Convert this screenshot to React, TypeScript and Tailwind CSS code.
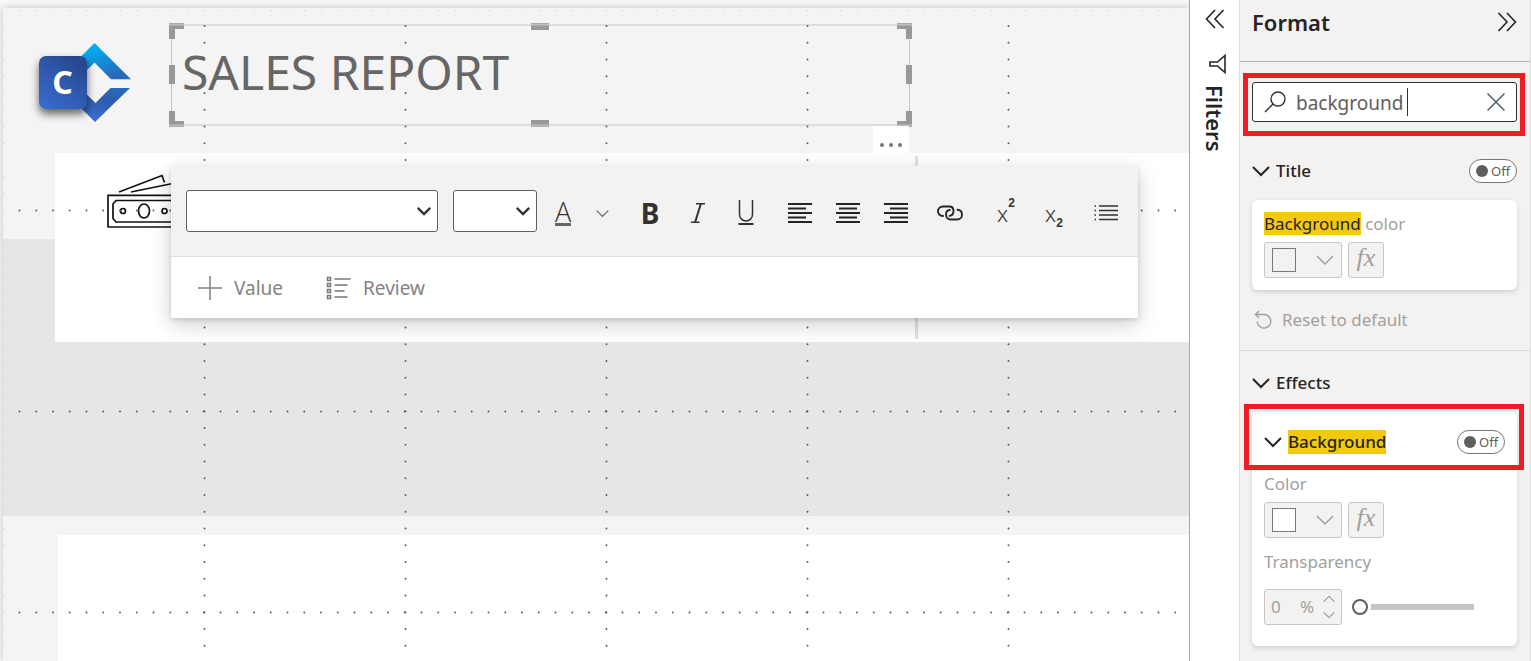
import type { ReactNode } from "react";

const COLUMNS = [201, 402, 603, 804, 1005];
const ROWS = [202, 403, 604];

function Chevron({ className = "", size = 18, stroke = 2 }: { className?: string; size?: number; stroke?: number }) {
  return (
    <svg width={size} height={size} viewBox="0 0 18 18" className={className} fill="none" stroke="currentColor" strokeWidth={stroke} aria-hidden="true">
      <path d="M1 5l8 8 8-8" />
    </svg>
  );
}

function Logo() {
  return (
    <svg className="absolute left-[27px] top-[27px]" width="112" height="96" viewBox="30 35 112 96" aria-label="Logo">
      <defs>
        <linearGradient id="upper" x1="0" y1="0" x2="0.5" y2="1">
          <stop offset="0" stopColor="#00b4f5" />
          <stop offset="0.3" stopColor="#06a6ea" />
          <stop offset="1" stopColor="#2a68b8" />
        </linearGradient>
        <linearGradient id="lower" x1="0.8" y1="0" x2="0.4" y2="1">
          <stop offset="0" stopColor="#2270bd" />
          <stop offset="0.4" stopColor="#2f5bae" />
          <stop offset="1" stopColor="#3a6dd0" />
        </linearGradient>
        <linearGradient id="tile" x1="0.9" y1="0" x2="0.2" y2="1">
          <stop offset="0" stopColor="#244486" />
          <stop offset="0.5" stopColor="#2f58ac" />
          <stop offset="1" stopColor="#376acb" />
        </linearGradient>
        <filter id="tileShadow" x="-30%" y="-30%" width="160%" height="170%">
          <feDropShadow dx="0" dy="5" stdDeviation="4" floodColor="#000" floodOpacity="0.6" />
        </filter>
      </defs>
      <path d="M94.500 43L131 79.300H111L94.500 62.500 80 77V57.500z" fill="url(#upper)" />
      <path d="M130 88L95 122 78 105V86L95.500 103 110.500 88z" fill="url(#lower)" />
      <rect x="39" y="56" width="48" height="53" rx="7" fill="url(#tile)" filter="url(#tileShadow)" />
      <text x="62.500" y="94" textAnchor="middle" fontFamily="Noto Sans, sans-serif" fontWeight="700" fontSize="32" fill="#fff">C</text>
    </svg>
  );
}

function MoneyIcon() {
  return (
    <svg className="absolute left-[103px] top-[165px]" width="76" height="56" viewBox="106 173 76 56" fill="none" stroke="#111" strokeWidth="1.700" aria-hidden="true">
      <path d="M119 192L162 175.500l2.500 7M131 192l44-9" />
      <path d="M108 195.300h73M108 227h73M108 194.500v33" />
      <path d="M176 200.500h-60l-3 3.500v14.500l3 3.500h60" />
      <circle cx="123" cy="211" r="2.500" />
      <ellipse cx="144" cy="211" rx="5.500" ry="7" />
      <circle cx="164.500" cy="211" r="2.500" />
    </svg>
  );
}

function GridDots() {
  return (
    <svg className="pointer-events-none absolute inset-0 h-full w-full" fill="none" strokeLinecap="round" strokeDasharray="0.01 16.74" aria-hidden="true">
      <g stroke="#c4c4c4" strokeWidth="1.200">
        <line x1="17" y1="2.500" x2="1184" y2="2.500" />
        <line x1="1.500" y1="18" x2="1.500" y2="2000" />
      </g>
      <g stroke="#5a5a5a" strokeWidth="1.900">
        {COLUMNS.map((x) => (
          <line key={x} x1={x + 0.5} y1="18" x2={x + 0.5} y2="2000" />
        ))}
        {ROWS.map((y) => (
          <line key={y} x1="16.500" y1={y + 0.5} x2="1184" y2={y + 0.5} />
        ))}
      </g>
    </svg>
  );
}

function SelectionFrame() {
  return (
    <svg className="pointer-events-none absolute -left-[2px] -top-[1px]" width="743" height="105" viewBox="169 23 743 105" fill="none" aria-hidden="true">
      <path d="M172 25h737M172 125h737" stroke="#dedede" strokeWidth="2" />
      <path d="M171.500 25v101M909.500 25v101" stroke="#c4c4c4" />
      <g fill="#999">
        <path d="M169 23h15v6h-9v10h-6zM912 23h-15v6h9v10h6zM169 127h15v-6h-9v-10h-6zM912 127h-15v-6h9v-10h6z" />
        <path d="M531 23h18v7h-18zM531 120h18v7h-18zM169 65h6v19h-6zM906 65h6v19h-6z" />
      </g>
      <path d="M169 24.500h15M897 24.500h15M531 24.500h18M169 125.500h15M897 125.500h15M531 125.500h18" stroke="#bdbdbd" strokeWidth="2" />
    </svg>
  );
}

function Tool({ label, children }: { label: string; children: ReactNode }) {
  return (
    <button type="button" aria-label={label} title={label} className="flex h-12 w-12 items-center justify-center pt-1 text-[#323130]">
      {children}
    </button>
  );
}

function Lines({ d }: { d: string }) {
  return (
    <svg width="26" height="24" viewBox="0 0 26 24" fill="none" stroke="#252423" strokeWidth="2" aria-hidden="true">
      <path d={d} />
    </svg>
  );
}

function Dropdown({ label, className }: { label: string; className: string }) {
  return (
    <div className={`relative ${className}`}>
      <select aria-label={label} className="h-full w-full appearance-none rounded-[3px] border border-[#605e5c] bg-white px-3">
        <option></option>
      </select>
      <Chevron size={14} stroke={3} className="pointer-events-none absolute right-[7px] top-[14px] text-[#323130]" />
    </div>
  );
}

function Toolbar() {
  return (
    <div role="toolbar" aria-label="Text formatting" className="absolute left-[168px] top-[158px] w-[967px] bg-white shadow-[0_6px_20px_rgba(0,0,0,0.2),0_2px_4px_rgba(0,0,0,0.12)]">
      <div className="flex h-[91px] items-center border-b border-[#e1dfdd] bg-[#f3f2f1] pl-[15px] pr-2">
        <Dropdown label="Font" className="h-[42px] w-[252px]" />
        <Dropdown label="Font size" className="ml-[15px] h-[42px] w-[84px]" />
        <div className="ml-0.5 flex items-center">
          <Tool label="Font color">
            <span className="border-b-[3px] border-[#666] font-['Open_Sans',sans-serif] text-[27px] leading-[23px] font-light">A</span>
          </Tool>
          <button type="button" aria-label="More font colors" className="flex h-12 w-[30px] items-center justify-center pt-1 text-[#605e5c]">
            <Chevron size={13} stroke={1.5} />
          </button>
        </div>
        <div className="ml-[9px] flex">
          <Tool label="Bold"><span className="text-[28px] leading-8 font-bold">B</span></Tool>
          <Tool label="Italic">
            <svg width="16" height="22" viewBox="0 0 16 22" fill="none" stroke="#323130" strokeWidth="1.500" aria-hidden="true">
              <path d="M6 1.800h9M1 20.200h8.500" />
              <path d="M10.800 2L5.200 20" strokeWidth="2" />
            </svg>
          </Tool>
          <Tool label="Underline">
            <svg width="16" height="26" viewBox="0 0 16 26" fill="none" stroke="#323130" strokeWidth="1.500" aria-hidden="true">
              <path d="M1.500 0v14.500a6.500 6.500 0 0 0 13 0V0" />
              <path d="M.5 24h15" strokeWidth="2" />
            </svg>
          </Tool>
        </div>
        <div className="ml-1.5 flex">
          <Tool label="Align left"><Lines d="M1 3h24M1 7.500h18M1 12h24M1 16.500h18M1 21h24" /></Tool>
          <Tool label="Align center"><Lines d="M1 3h24M4 7.500h18M1 12h24M4 16.500h18M1 21h24" /></Tool>
          <Tool label="Align right"><Lines d="M1 3h24M7 7.500h18M1 12h24M7 16.500h18M1 21h24" /></Tool>
        </div>
        <div className="ml-1.5 flex">
          <Tool label="Insert link">
            <svg width="26" height="16" viewBox="0 0 26 16" fill="none" stroke="#252423" strokeWidth="1.900" strokeLinecap="round" aria-hidden="true">
              <path d="M6 11C2.500 11 1 8.500 1 6.300 1 3.500 3 1.500 6 1.500h6.500c2.500 0 4 2 4 4.500s-1.500 4.700-4 4.900" />
              <path d="M12.800 5C10.500 5.200 9 7 9 9.500c0 3 2 5 4.500 5H20c3 0 5-2.200 5-4.800 0-2.700-1.500-4.700-4.500-4.900" />
            </svg>
          </Tool>
        </div>
        <div className="ml-2 flex">
          <Tool label="Superscript">
            <span className="flex items-start pb-1"><span className="pt-1 text-[22px] leading-6 font-light">x</span><span className="font-['Liberation_Sans',sans-serif] text-[12px] leading-3 font-bold">2</span></span>
          </Tool>
          <Tool label="Subscript">
            <span className="flex items-end pt-1"><span className="pb-1 text-[22px] leading-6 font-light">x</span><span className="font-['Liberation_Sans',sans-serif] text-[12px] leading-3 font-bold">2</span></span>
          </Tool>
        </div>
        <div className="ml-1 flex">
          <Tool label="Bulleted list">
            <svg width="26" height="20" viewBox="0 0 26 20" fill="none" stroke="#323130" strokeWidth="1.500" aria-hidden="true">
              <path d="M6 3h19M6 7.500h19M6 12h19M6 16.500h19M1.500 3h1.500M1.500 7.500h1.500M1.500 12h1.500M1.500 16.500h1.500" />
            </svg>
          </Tool>
        </div>
      </div>
      <div className="flex h-[61px] items-center gap-[43px] pl-[27px] text-[19px] text-[#858381]">
        <button type="button" className="flex items-center gap-3">
          <svg width="24" height="24" viewBox="0 0 24 24" fill="none" stroke="#858381" strokeWidth="1.500" aria-hidden="true"><path d="M12 0v24M0 12h24" /></svg>
          <span className="pt-0.5">Value</span>
        </button>
        <button type="button" className="flex items-center gap-3">
          <svg width="25" height="24" viewBox="0 0 25 24" fill="none" stroke="#797775" strokeWidth="1.500" aria-hidden="true">
            <path d="M1.500 1.500h3v3h-3zM1.500 7.500h3v3h-3zM1.500 13.500h3v3h-3zM1.500 19.500h3v3h-3zM8.500 3h16M8.500 9h13M8.500 15h10M8.500 21h13" />
          </svg>
          <span className="pt-0.5">Review</span>
        </button>
      </div>
    </div>
  );
}

function ReportCanvas() {
  return (
    <main className="flex min-w-0 flex-1 overflow-hidden border-r border-[#a8a8a8] bg-[#f8f8f8] pl-[3px] pt-2">
      <div className="relative flex-1 bg-[#f4f4f4] shadow-[0_0_8px_rgba(0,0,0,0.22)]">
        <div className="absolute inset-x-0 top-[231px] h-[277px] bg-[#e6e6e6]" />
        <div className="absolute left-[52px] right-0 top-[145px] h-[189px] bg-white" />
        <div className="absolute bottom-0 left-[55px] right-0 top-[527px] bg-white" />
        <div className="absolute left-[912px] top-[148px] h-[183px] w-[3px] bg-[#e1e1e1]" />
        <Logo />
        <MoneyIcon />
        <section className="absolute left-[168px] top-4 h-[102px] w-[739px] pl-[11px] pt-4">
          <h1 className="text-[48px] leading-[64px] text-[#666]">SALES REPORT</h1>
          <SelectionFrame />
        </section>
        <GridDots />
        <button type="button" aria-label="More options" className="absolute left-[870px] top-[118px] flex h-7 w-9 items-end justify-center bg-white pb-1">
          <svg width="24" height="10" viewBox="0 0 24 10" fill="#777" aria-hidden="true"><circle cx="3" cy="5" r="2" /><circle cx="12" cy="5" r="2" /><circle cx="21" cy="5" r="2" /></svg>
        </button>
        <Toolbar />
      </div>
    </main>
  );
}

function FiltersRail() {
  return (
    <aside className="flex w-[50px] shrink-0 flex-col items-center border-r border-[#e1dfdd] bg-white pt-[9px] text-[#252423]">
      <button type="button" aria-label="Expand filters">
        <svg width="20" height="20" viewBox="0 0 20 20" fill="none" stroke="currentColor" strokeWidth="1.600" aria-hidden="true"><path d="M10 1L1.500 10l8.500 9M18.500 1L10 10l8.500 9" /></svg>
      </button>
      <svg className="ml-1.5 mt-6" width="18" height="22" viewBox="0 0 18 22" fill="none" stroke="currentColor" strokeWidth="1.600" aria-hidden="true"><path d="M16 2.500v17L8.500 13H1V9h7.500z" /></svg>
      <h2 className="mt-2.5 text-[22px] leading-7 font-semibold [writing-mode:vertical-rl]">Filters</h2>
    </aside>
  );
}

function Toggle({ label }: { label: string }) {
  return (
    <button type="button" role="switch" aria-checked="false" aria-label={label} className="flex h-6 w-12 items-center gap-[3px] rounded-full border border-[#797775] bg-white pl-1.5 text-[13px] text-[#605e5c]">
      <span className="h-3 w-3 rounded-full bg-[#605e5c]" />
      Off
    </button>
  );
}

function ColorPicker({ label, fill }: { label: string; fill: string }) {
  return (
    <div className="flex gap-1.5 text-[#a19f9d]">
      <button type="button" aria-label={label} className="flex h-9 w-[78px] items-center justify-between rounded-[3px] border border-[#c8c6c4] bg-[#f3f2f1] pl-[7px] pr-[7px]">
        <span className={`h-6 w-6 border border-[#797775] ${fill}`} />
        <Chevron stroke={1.5} />
      </button>
      <button type="button" aria-label="Conditional formatting" className="h-9 w-9 rounded-[3px] border border-[#c8c6c4] bg-[#f3f2f1] pb-1 font-['Liberation_Serif',serif] text-[26px] leading-7 italic text-[#a19f9d]">
        fx
      </button>
    </div>
  );
}

function Marker({ className }: { className: string }) {
  return <div className={`pointer-events-none absolute border-[5px] border-[#ee1c24] ${className}`} />;
}

function FormatPane() {
  return (
    <aside className="w-[291px] shrink-0 border-r border-[#e1dfdd] bg-[#f3f2f1] text-[17px] leading-6 text-[#a19f9d]">
      <header className="flex h-[62px] items-start justify-between border-b border-[#b8b6b4] pl-3 pr-[13px] pt-2 text-[#252423]">
        <h2 className="text-[22px] leading-7 font-semibold">Format</h2>
        <button type="button" aria-label="Collapse pane" className="mt-1">
          <svg width="20" height="20" viewBox="0 0 20 20" fill="none" stroke="currentColor" strokeWidth="1.600" aria-hidden="true"><path d="M1.500 1L10 10l-8.500 9M10 1l8.500 9-8.500 9" /></svg>
        </button>
      </header>

      <div className="pl-3 pr-[13px] pt-5">
        <div className="relative">
          <div className="flex h-10 items-center rounded-[3px] border border-[#323130] bg-white pl-[11px] pr-[11px]">
            <svg width="22" height="22" viewBox="0 0 22 22" fill="none" stroke="#323130" strokeWidth="1.400" aria-hidden="true"><circle cx="14" cy="8" r="7" /><path d="M9 13l-8 8" /></svg>
            <div className="ml-2.5 grid min-w-0 flex-1 items-center">
              <input type="text" aria-label="Search" defaultValue="background" className="col-start-1 row-start-1 w-full min-w-0 bg-transparent pt-0.5 text-[19px] text-[#605e5c] outline-none" />
              <span aria-hidden="true" className="pointer-events-none col-start-1 row-start-1 ml-[111px] h-7 w-px bg-[#323130]" />
            </div>
            <button type="button" aria-label="Clear search">
              <svg width="18" height="18" viewBox="0 0 18 18" fill="none" stroke="#3f5568" strokeWidth="1.400" aria-hidden="true"><path d="M.5.5l17 17M17.500.5l-17 17" /></svg>
            </button>
          </div>
          <Marker className="-bottom-3.5 -left-[9px] -right-2 -top-[9px]" />
        </div>
      </div>

      <section className="pl-3 pr-[13px] pt-9">
        <div className="flex h-[26px] items-center justify-between">
          <h3 className="flex items-center gap-1.5 font-medium text-[#252423]"><Chevron />Title</h3>
          <Toggle label="Title" />
        </div>
        <div className="mt-4 h-[90px] rounded-md bg-white p-3 shadow-[0_2px_5px_rgba(0,0,0,0.15)]">
          <p className="mb-1.5"><mark className="bg-[#f2c811] text-[#252423]">Background</mark> color</p>
          <ColorPicker label="Title background color" fill="bg-[#f3f2f1]" />
        </div>
        <button type="button" className="mt-[18px] flex items-center gap-2">
          <svg className="ml-0.5" width="20" height="20" viewBox="0 0 20 20" fill="none" stroke="currentColor" strokeWidth="1.400" aria-hidden="true"><path d="M5 1L1.500 4.500 5 8M1.500 4.500H10a6.800 6.800 0 1 1-6.800 7" /></svg>
          Reset to default
        </button>
      </section>

      <section className="mt-[18px] border-t border-[#dddbd9] pl-3 pr-[13px] pt-5">
        <h3 className="flex items-center gap-1.5 font-medium text-[#252423]"><Chevron />Effects</h3>
        <div className="relative mt-[17px] h-[234px] rounded-md bg-white px-3 pt-[18px] shadow-[0_2px_5px_rgba(0,0,0,0.15)]">
          <Marker className="-left-2 -right-[7px] -top-2 h-[66px]" />
          <div className="flex items-center justify-between">
            <h4 className="flex items-center gap-1.5 font-medium text-[#252423]"><Chevron /><mark className="bg-[#f2c811] text-[#252423]">Background</mark></h4>
            <Toggle label="Background" />
          </div>
          <p className="mb-1.5 mt-[18px]">Color</p>
          <ColorPicker label="Background color" fill="bg-white" />
          <label htmlFor="transparency" className="mt-3 block">Transparency</label>
          <div className="mt-[15px] flex items-center gap-2.5">
            <div className="flex h-9 w-[78px] items-center rounded-[3px] border border-[#c8c6c4] bg-[#f3f2f1] pl-1.5 pr-1.5">
              <input id="transparency" type="text" inputMode="numeric" defaultValue="0" className="w-[29px] bg-transparent outline-none" />
              <span>%</span>
              <div className="ml-auto flex flex-col gap-1">
                <button type="button" aria-label="Increase"><Chevron size={12} stroke={1.8} className="rotate-180" /></button>
                <button type="button" aria-label="Decrease"><Chevron size={12} stroke={1.8} /></button>
              </div>
            </div>
            <input
              type="range"
              aria-label="Transparency"
              min="0"
              max="100"
              defaultValue="0"
              className="h-5 w-[122px] appearance-none bg-transparent [&::-webkit-slider-runnable-track]:h-1.5 [&::-webkit-slider-runnable-track]:bg-[#c8c6c4] [&::-webkit-slider-thumb]:-mt-[5px] [&::-webkit-slider-thumb]:h-4 [&::-webkit-slider-thumb]:w-4 [&::-webkit-slider-thumb]:appearance-none [&::-webkit-slider-thumb]:rounded-full [&::-webkit-slider-thumb]:border-2 [&::-webkit-slider-thumb]:border-[#605e5c] [&::-webkit-slider-thumb]:bg-white [&::-webkit-slider-thumb]:shadow-[0_0_0_3px_white]"
            />
          </div>
        </div>
      </section>
    </aside>
  );
}

export default function App() {
  return (
    <div className="flex min-h-screen bg-white font-['Noto_Sans',sans-serif]">
      <ReportCanvas />
      <FiltersRail />
      <FormatPane />
    </div>
  );
}
